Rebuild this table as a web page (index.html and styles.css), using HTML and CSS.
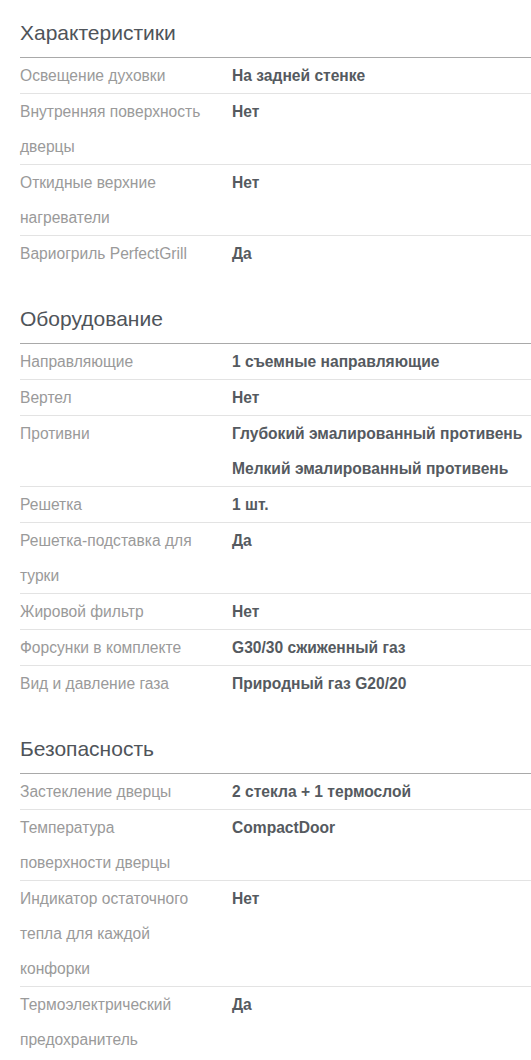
FILE: index.html
```html
<!DOCTYPE html>
<html lang="ru">
<head>
<meta charset="utf-8">
<link rel="stylesheet" href="styles.css">
</head>
<body>
<div class="page">
  <section class="group">
    <h2 class="group-title">Характеристики</h2>
    <div class="row"><div class="label">Освещение духовки</div><div class="value">На задней стенке</div></div>
    <div class="row"><div class="label">Внутренняя поверхность дверцы</div><div class="value">Нет</div></div>
    <div class="row"><div class="label">Откидные верхние нагреватели</div><div class="value">Нет</div></div>
    <div class="row"><div class="label">Вариогриль PerfectGrill</div><div class="value">Да</div></div>
  </section>
  <section class="group">
    <h2 class="group-title">Оборудование</h2>
    <div class="row"><div class="label">Направляющие</div><div class="value">1 съемные направляющие</div></div>
    <div class="row"><div class="label">Вертел</div><div class="value">Нет</div></div>
    <div class="row"><div class="label">Противни</div><div class="value"><div>Глубокий эмалированный противень</div><div>Мелкий эмалированный противень</div></div></div>
    <div class="row"><div class="label">Решетка</div><div class="value">1 шт.</div></div>
    <div class="row"><div class="label">Решетка-подставка для турки</div><div class="value">Да</div></div>
    <div class="row"><div class="label">Жировой фильтр</div><div class="value">Нет</div></div>
    <div class="row"><div class="label">Форсунки в комплекте</div><div class="value">G30/30 сжиженный газ</div></div>
    <div class="row"><div class="label">Вид и давление газа</div><div class="value">Природный газ G20/20</div></div>
  </section>
  <section class="group">
    <h2 class="group-title">Безопасность</h2>
    <div class="row"><div class="label">Застекление дверцы</div><div class="value">2 стекла + 1 термослой</div></div>
    <div class="row"><div class="label">Температура поверхности дверцы</div><div class="value">CompactDoor</div></div>
    <div class="row"><div class="label">Индикатор остаточного тепла для каждой конфорки</div><div class="value">Нет</div></div>
    <div class="row"><div class="label">Термоэлектрический предохранитель</div><div class="value">Да</div></div>
  </section>
</div>
</body>
</html>
```

FILE: styles.css
```css
html, body {
  margin: 0;
  padding: 0;
  background: #ffffff;
}

body {
  font-family: "Liberation Sans", Arial, sans-serif;
  font-size: 15.6px;
}

.page {
  padding: 18px 0 0 20px;
}

.group {
  margin-bottom: 33px;
}

.group-title {
  margin: 0;
  font-size: 21px;
  font-weight: normal;
  line-height: 30px;
  color: #4f545a;
  padding-bottom: 9px;
  border-bottom: 1px solid #a9a9a9;
}

.row {
  display: grid;
  grid-template-columns: 212px 1fr;
  line-height: 35px;
  border-bottom: 1px solid #e3e3e3;
}

.row:last-child {
  border-bottom: none;
}

.label {
  color: #9a9a9a;
  padding-right: 27px;
}

.value {
  color: #555a60;
  font-weight: bold;
}
```
